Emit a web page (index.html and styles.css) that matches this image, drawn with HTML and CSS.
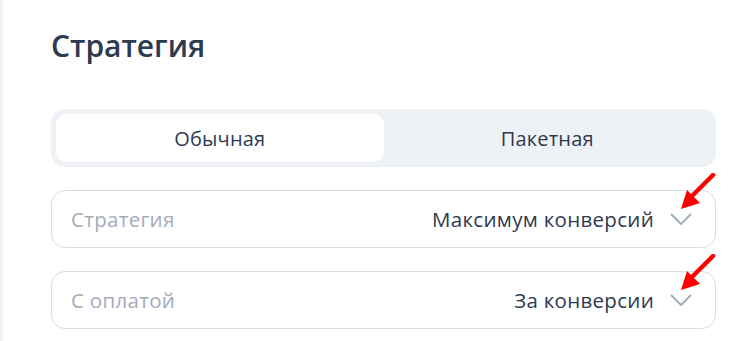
FILE: index.html
```html
<!DOCTYPE html>
<html>

<head>
    <title>Стратегия</title>
    <meta charset="UTF-8">
    <link rel="stylesheet" href="styles.css">
</head>

<body>
    <div class="panel">
        <h1 class="title">Стратегия</h1>

        <div class="tabs">
            <div class="tab active">Обычная</div>
            <div class="tab">Пакетная</div>
        </div>

        <div class="field">
            <span class="label">Стратегия</span>
            <span class="value">Максимум конверсий</span>
            <svg class="chevron" width="22" height="12" viewBox="0 0 22 12"><path d="M1 1l10 10L21 1" fill="none" stroke="#a5adbd" stroke-width="2"/></svg>
            <svg class="pointer" width="40" height="40" viewBox="0 0 40 40"><path d="M36 2L14 24" stroke="#f00" stroke-width="4.5" stroke-linecap="round"/><path d="M4 36L10 17L23 30Z" fill="#f00"/></svg>
        </div>

        <div class="field">
            <span class="label">С оплатой</span>
            <span class="value">За конверсии</span>
            <svg class="chevron" width="22" height="12" viewBox="0 0 22 12"><path d="M1 1l10 10L21 1" fill="none" stroke="#a5adbd" stroke-width="2"/></svg>
            <svg class="pointer" width="40" height="40" viewBox="0 0 40 40"><path d="M36 2L14 24" stroke="#f00" stroke-width="4.5" stroke-linecap="round"/><path d="M4 36L10 17L23 30Z" fill="#f00"/></svg>
        </div>
    </div>
</body>

</html>
```

FILE: styles.css
```css
* {
    margin: 0;
    padding: 0;
    box-sizing: border-box;
}

body {
    font-family: "Open Sans", "Noto Sans", Arial, sans-serif;
    color: #2e3a4f;
    background: #fff;
    border-left: 3px solid #eef1f6;
    min-height: 341px;
}

.panel {
    width: 713px;
    padding: 26px 0 0 48px;
}

.title {
    font-size: 30px;
    font-weight: 600;
    line-height: 40px;
    margin-bottom: 43px;
}

.tabs {
    display: flex;
    background: #eef1f6;
    border-radius: 14px;
    padding: 5px;
    height: 58px;
    margin-bottom: 23px;
}

.tab {
    flex: 1;
    display: flex;
    align-items: center;
    justify-content: center;
    font-size: 20px;
    letter-spacing: 0.2px;
    border-radius: 11px;
}

.tab.active {
    background: #fff;
}

.field {
    position: relative;
    display: flex;
    align-items: center;
    height: 58px;
    border: 1px solid #d8dce6;
    border-radius: 14px;
    padding: 0 23px 0 19px;
    margin-bottom: 23px;
    font-size: 20.5px;
    letter-spacing: 0.3px;
}

.label {
    color: #a3abbd;
    flex: 1;
}

.value {
    margin-right: 16px;
}

.chevron {
    display: block;
}

.pointer {
    position: absolute;
    right: -2px;
    top: -18px;
}
```
